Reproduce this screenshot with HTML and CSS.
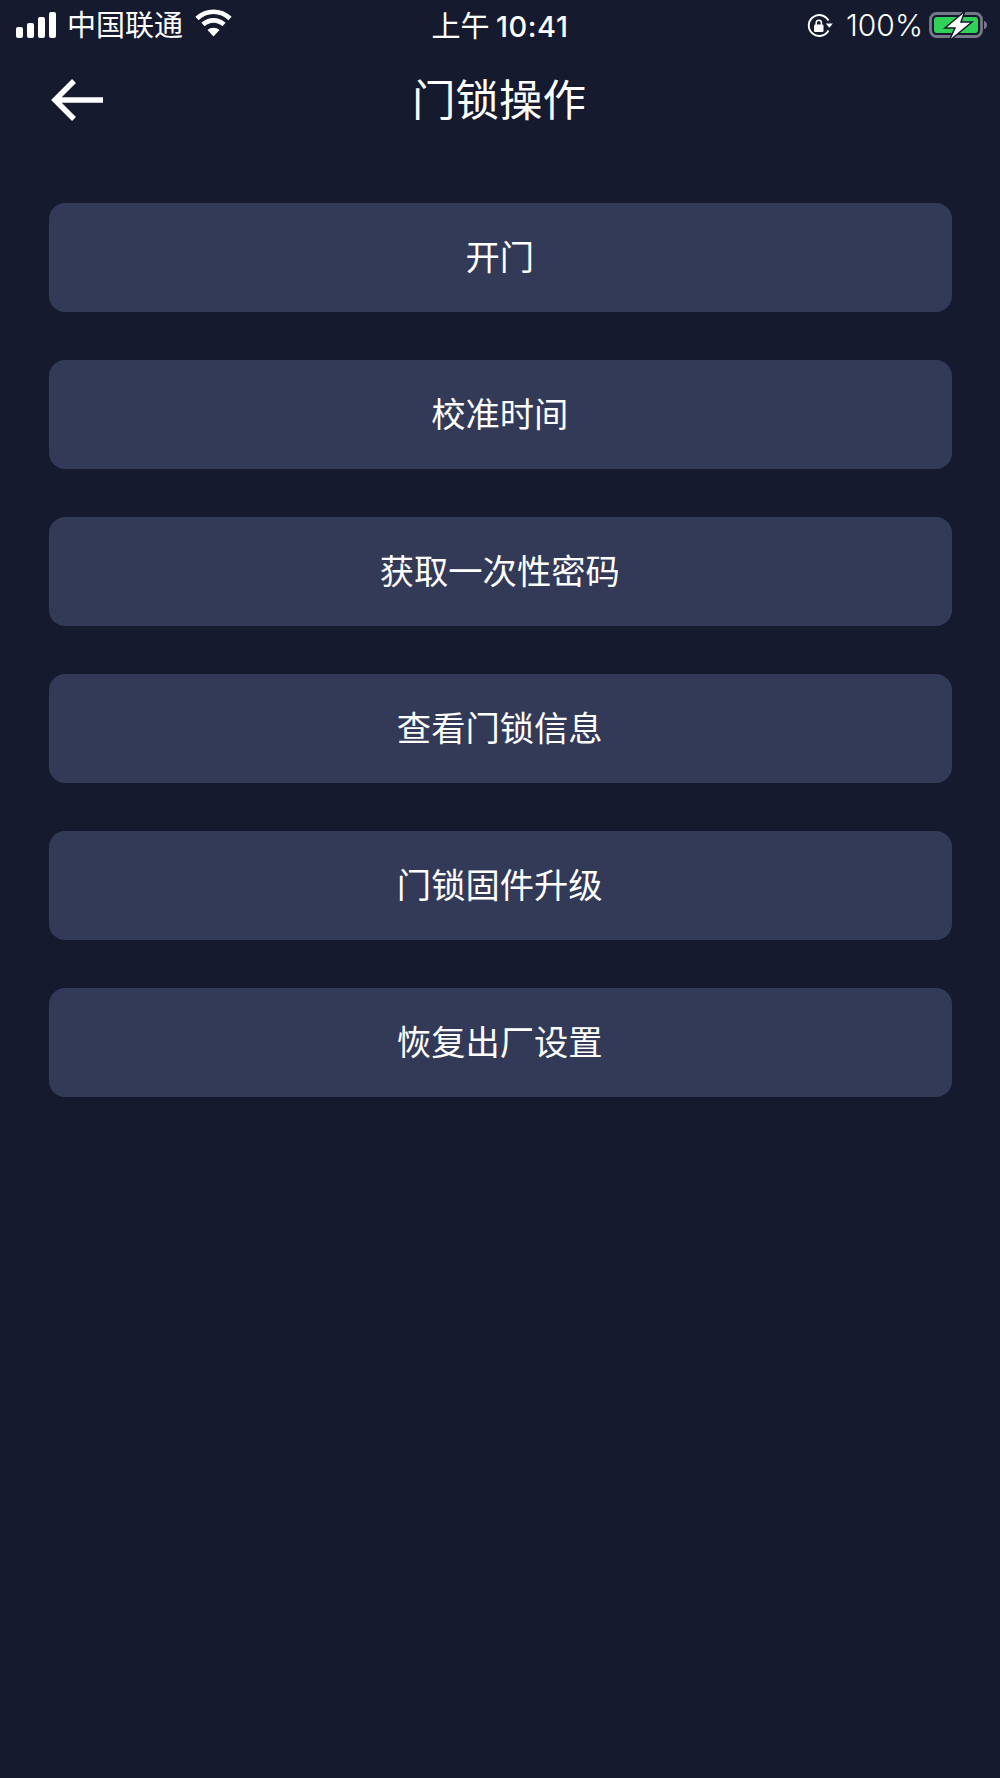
FILE: index.html
```html
<!DOCTYPE html>
<html lang="zh-CN">
<head>
<meta charset="utf-8">
<title>门锁操作</title>
<link rel="stylesheet" href="styles.css">
</head>
<body>
<div class="status">
  <div class="status-left">
    <svg class="signal" width="42" height="26" viewBox="0 0 42 26"><g fill="#fff"><rect x="0" y="15" width="7" height="11" rx="2"/><rect x="11" y="11" width="7" height="15" rx="2"/><rect x="22" y="5" width="7" height="21" rx="2"/><rect x="33" y="0" width="7" height="26" rx="2"/></g></svg>
    <span class="carrier">中国联通</span>
    <svg class="wifi" width="37" height="28" viewBox="0 0 37 28"><g fill="none" stroke="#fff" stroke-width="4.600"><path d="M2 9.500C11.500 .5 25.500 .5 35 9.500"/><path d="M8 15.500C14 10 23 10 29 15.500"/></g><path d="M12.500 21C16 18 21 18 24.500 21L18.500 27.500Z" fill="#fff"/></svg>
  </div>
  <div class="status-time">上午 <span class="clock">10:41</span></div>
  <div class="status-right">
    <svg class="lock" width="26" height="24" viewBox="0 0 26 24"><path d="M21.500 16.500A10.500 10.500 0 1 1 21.500 6.500" fill="none" stroke="#fff" stroke-width="1.900"/><path d="M18.800 9.500h7l-3.500 4.200z" fill="#fff"/><rect x="7" y="10.500" width="9.500" height="7.500" rx="1.300" fill="#fff"/><path d="M9.200 11V8.800a2.600 2.600 0 0 1 5.200 0V11" fill="none" stroke="#fff" stroke-width="1.500"/></svg>
    <span class="percent">100%</span>
    <svg class="battery" width="60" height="32" viewBox="0 0 60 32"><rect x="2.500" y="3.500" width="51" height="23" rx="6" fill="none" stroke="#77798a" stroke-width="2.800"/><rect x="6" y="7" width="44" height="16" rx="3" fill="#30d158"/><path d="M56 11c2 .5 3 2 3 4s-1 3.500-3 4z" fill="#77798a"/><path d="M37 1 17 18h10l-6 13 23-19H33z" fill="#fff" stroke="#151a2e" stroke-width="1.500"/></svg>
  </div>
</div>
<header class="nav">
  <svg class="back" width="54" height="44" viewBox="0 0 54 44"><path d="M24 3 5 22l19 19M5 22h48" fill="none" stroke="#fff" stroke-width="5.500"/></svg>
  <h1 class="title">门锁操作</h1>
</header>
<main class="actions">
  <button class="action">开门</button>
  <button class="action">校准时间</button>
  <button class="action">获取一次性密码</button>
  <button class="action">查看门锁信息</button>
  <button class="action">门锁固件升级</button>
  <button class="action">恢复出厂设置</button>
</main>
</body>
</html>
```
FILE: styles.css
```css
* { box-sizing: border-box; }
html, body { margin: 0; padding: 0; }
body {
  width: 1000px;
  height: 1778px;
  background: #151a2e;
  color: #fff;
  font-family: "Noto Sans CJK SC", "Liberation Sans", sans-serif;
  overflow: hidden;
}
.status {
  position: relative;
  height: 50px;
  display: flex;
  justify-content: space-between;
  align-items: center;
}
.status-left { display: flex; align-items: center; padding-left: 16px; }
.carrier { font-size: 29px; line-height: 46px; margin-left: 9px; padding-bottom: 4px; font-weight: 400; }
.wifi { margin-left: 12px; margin-top: -4px; }
.status-time {
  position: absolute;
  left: 0; right: 0;
  text-align: center;
  font-size: 29px;
  line-height: 46px;
  font-weight: 400;
}
.clock { font-family: Inter, "Liberation Sans", sans-serif; font-weight: 500; font-size: 29px; letter-spacing: .5px; }
.status-right { display: flex; align-items: center; padding-right: 12px; }
.lock { margin-top: 2px; }
.percent { font-family: Inter, "Liberation Sans", sans-serif; font-size: 30px; font-weight: 300; margin-left: 13px; margin-right: 5px; line-height: 46px; }
.battery { margin-top: 2px; }
.nav {
  position: relative;
  height: 100px;
  display: flex;
  align-items: center;
  justify-content: center;
}
.back { position: absolute; left: 50px; top: 28px; }
.title { margin: 0 2px 0 0; font-size: 43.500px; font-weight: 400; line-height: 96px; height: 100px; }
.actions {
  display: flex;
  flex-direction: column;
  gap: 48.500px;
  padding: 53px 48px 0 48.500px;
}
.action {
  height: 108.500px;
  border: 0;
  border-radius: 16px;
  background: #333a57;
  color: #fff;
  padding: 0 1px 4px 0;
  font: 400 34.300px "Noto Sans CJK SC", sans-serif;
}
```
